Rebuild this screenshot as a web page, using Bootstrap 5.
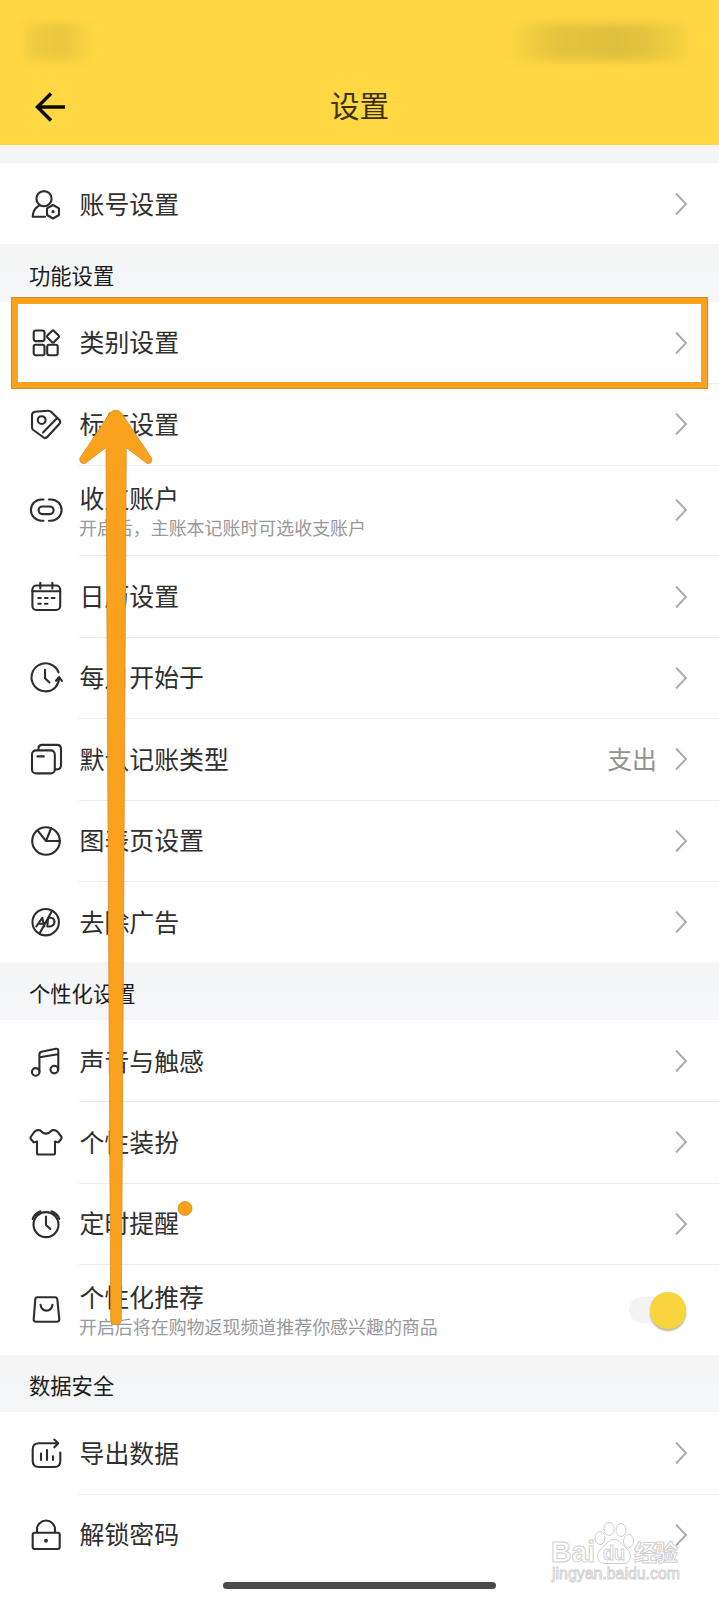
<!DOCTYPE html>
<html lang="zh-CN">
<head>
<meta charset="utf-8">
<meta name="viewport" content="width=device-width, initial-scale=1">
<title>设置</title>
<link href="https://cdn.jsdelivr.net/npm/bootstrap@5.3.0/dist/css/bootstrap.min.css" rel="stylesheet">
<style>
body{font-family:"Noto Sans CJK SC",sans-serif;color:#2f2f2f;background:#fff;height:1600px;overflow:hidden}
.topbar{height:145px;background:#ffd843}
.status{height:72px;padding:23px 29px 0 25px}
.smudge{height:38px;filter:blur(5px)}
.smudge-l{width:80px;background:linear-gradient(90deg,#f2ce41,#e9c640 45%,#ffd843 90%)}
.smudge-r{width:186px;background:linear-gradient(90deg,#ffd843,#e4c33e 28%,#dfbf3e 60%,#e2c23e 75%,#f9d442)}
.titlebar{height:71px}
.titlebar h1{font-size:29.6px;line-height:40px;color:#3b3216;font-weight:400;position:relative;top:-3px}
.back{left:34px;top:19px}
.gap-strip{height:18px;background:#f5f4f6}
.section-title{height:57.3px;padding:4px 0 0 29px;font-size:21.3px;color:#1c1c1c;background:linear-gradient(#f5f5f5,#f4f6f9)}
.setting{height:81.45px;padding-left:30px}
.setting.tall{height:90.7px}
.setting .ico{width:32px;height:32px;fill:none;stroke:#2e2d2b;stroke-width:2.1;stroke-linecap:round;stroke-linejoin:round;flex:none}
.setting .ico .solid{fill:#2e2d2b;stroke:none}
.body-cell{margin-left:17px;padding-right:31px;padding-top:1px;font-size:24.9px;box-shadow:0 1px #ebebeb}
.setting.last .body-cell{box-shadow:none}
.label{line-height:32px;position:relative;top:-1.500px;left:.5px}
.note{font-size:17.95px;line-height:22px;color:#96989b;margin-top:2px;position:relative;top:-.5px}
.tall .label{top:-1.500px}
.value{color:#929292;margin-right:18px;line-height:32px;position:relative;top:-1.500px}
.chev{width:13px;height:24px;fill:none;stroke:#ababab;stroke-width:1.9;flex:none}
.toggle{width:57px;height:38px;right:2px;top:.5px}
.toggle .rail{left:0;top:6px;width:44px;height:26px;border-radius:13px;background:#f3f3f3}
.toggle .knob{right:0;top:1px;width:36.5px;height:36.5px;border-radius:50%;background:#fad43d;box-shadow:0 2px 2px #b9b4a2}
.focus-box{left:11px;top:296.5px;width:697px;height:92.5px;border:7px solid #faa21d;outline:1px solid #d18c2a;outline-offset:-1px}
.overlay{left:0;top:0;pointer-events:none}
.homebar{left:223px;top:1582px;width:273px;height:6.5px;border-radius:4px;background:#4b4b4b}
</style>
</head>
<body class="position-relative">
<header class="topbar">
  <div class="status d-flex justify-content-between"><div class="smudge smudge-l"></div><div class="smudge smudge-r"></div></div>
  <div class="titlebar position-relative d-flex justify-content-center align-items-center">
    <svg class="back position-absolute" width="34" height="32" fill="none" stroke="#0c0a02" stroke-width="3.5"><path d="M31 16H4M17 2.500L3.500 16L17 29.500"/></svg>
    <h1 class="m-0">设置</h1>
  </div>
</header>
<div class="gap-strip"></div>
<main id="list"></main>

<div class="focus-box position-absolute"></div>
<svg class="overlay position-absolute" width="719" height="1600">
  <g fill="#faa21d" stroke="#d58d29" stroke-width=".8">
    <path d="M110 413Q115.700 407 121.500 413L151.500 458Q153 464 147 463.500L126.300 447.500L121.300 1321Q120.500 1325 116 1325Q111.500 1325 110.700 1321L106 447.500L85 463.500Q79 464 80 458Z"/>
    <circle cx="185" cy="1208.500" r="7"/>
  </g>
  <g fill="#fff" stroke="#cfcfcf" stroke-width="1">
    <g font-family="Liberation Sans" font-weight="700">
      <text x="551" y="1562" font-size="29" textLength="44" lengthAdjust="spacingAndGlyphs">Bai</text>
      <text x="634" y="1561" font-family="Noto Sans CJK SC" font-size="23" textLength="44">经验</text>
      <text x="552" y="1579" font-size="16" font-weight="400" textLength="128" lengthAdjust="spacingAndGlyphs" stroke-width=".9">jingyan.baidu.com</text>
    </g>
    <ellipse cx="600" cy="1538" rx="5" ry="6.500"/><ellipse cx="609" cy="1529" rx="5" ry="6.500"/><ellipse cx="621" cy="1530" rx="5" ry="6.500"/><ellipse cx="628.500" cy="1541" rx="5" ry="6.500"/>
    <path d="M614 1539.500C620 1539.500 622 1545 627 1549C632 1553 632 1563 624 1563.500H604C596 1563 596 1553 601 1549C606 1545 608 1539.500 614 1539.500Z"/>
    <text x="603" y="1560" font-family="Liberation Sans" font-size="20" font-weight="700" textLength="22" lengthAdjust="spacingAndGlyphs">du</text>
  </g>
</svg>
<div class="homebar position-absolute"></div>

<script>
const icons = {
  user:'<circle cx="14" cy="10.700" r="7.600"/><path d="M15 28.800H2.700Q3 21 9.200 17.300M23 17L29 20.300V27L23 30.500L17 27V20.300Z"/><circle class="solid" cx="23" cy="23.700" r="1.600"/>',
  grid:'<rect x="3.700" y="4.500" width="10.800" height="10.600" rx="2"/><rect x="3.700" y="18.700" width="10.800" height="10.500" rx="2"/><rect x="17.200" y="18.700" width="10.500" height="10.500" rx="2"/><path d="M22 4.900Q23 4 24 4.900L28.600 9.500Q29.500 10.500 28.600 11.500L24 16.100Q23 17 22 16.100L17.400 11.500Q16.500 10.500 17.400 9.500Z"/>',
  tag:'<path d="M5 3.800L18 2.700Q20 2.600 21.300 4L29.500 12Q31 14 29.500 15.700L17.500 28.800Q15.300 31 13 29L3.300 22Q2 21 2 19.500V7Q2.200 4.200 5 3.800ZM26.500 10.800L13 24.500"/><circle cx="11.700" cy="12.100" r="3.900"/>',
  link:'<path d="M13.500 5.500H11.500A10.600 10.600 0 0 0 11.500 26.700H13.500M19 5.500H21A10.600 10.600 0 0 1 21 26.700H19"/><rect x="8.600" y="12.500" width="15" height="7.600" rx="3.800"/>',
  cal:'<rect x="2.400" y="5.500" width="27.800" height="24.500" rx="4"/><path d="M2.400 11.300H30.200M10.300 2.800V8.500M22.400 2.800V8.500M8.300 18H10.800M15 18H17.500M21.700 18H24.500M8.300 23.700H10.800M15 23.700H17.500"/>',
  clock:'<path d="M28.600 11.300A14 14 0 1 0 25.500 26.200Q29 22 29.200 16.500M26 19.800L29.200 16L32 20M15 8.700V17.300L19.500 21.500"/>',
  copy:'<rect x="2" y="7.400" width="22.800" height="23" rx="4"/><path d="M8.500 7V5.500Q8.500 1.900 12 1.900H27Q31 1.900 31 6V22Q31 26.400 27 26.400H25M7.500 13.400H13.800"/>',
  pie:'<circle cx="16" cy="17" r="13.800"/><path d="M7.500 6.400L16 17L21 4.500M16 17H29.800"/>',
  ad:'<circle cx="15.700" cy="16.200" r="13.200"/><path d="M22 5L9.500 27.500M6.300 20.500L12.300 11.800L14.300 20.500M8.500 17.700H13.500M18 12.500L17.300 20.500H20Q24.300 20 24.500 15.800Q24.300 12 20.500 11.800H18.500"/>',
  music:'<circle cx="5.700" cy="26.900" r="3.800"/><circle cx="24.300" cy="24.600" r="3.800"/><path d="M9.400 26.500V9.500Q9.400 7.300 11.500 6.700L26 3.700Q28.300 3.500 28.300 5.500V24.500M9.600 12.300L28 9.200"/>',
  shirt:'<path d="M10 4.300Q16 11 22 4.300Q25.500 3.500 27.500 5.700L31.500 11Q32 12.200 31 13.300L28.600 16Q27.500 16.500 25 15.500V27Q25 28.500 23.500 28.500H8.500Q7 28.500 7 27V15.500Q4.500 16.500 3.400 16L1 13.300Q0 12.200 .7 11L4.500 5.700Q6.500 3.500 10 4.300Z"/>',
  alarm:'<circle cx="16" cy="17.600" r="12.500"/><path d="M16 9.600V18L20.300 22M2.700 12Q4.500 6.500 10.500 4.300M21.500 4.300Q27.500 6.500 29.300 12M5 8.500L8.500 5.500M27 8.500L23.500 5.500"/>',
  bag:'<path d="M7.500 3.500H25Q27 3.500 27.300 5.500L29.300 25.500Q29.400 28 27 28H6Q3.600 28 3.700 25.500L5.300 5.500Q5.500 3.500 7.500 3.500ZM10.500 11Q11.500 16.700 16.500 16.900Q21.500 16.700 22.500 11" transform="translate(0 .7)"/>',
  export:'<path d="M27.500 6.300H9Q2.700 6.300 2.700 12.500V24Q2.700 30 9 30H24.500Q30.300 30 30.300 24V15.500M24.300 2.500L28.300 6.300L24.300 10.300M11 16.500V23M17 13V23M23 19.300V23"/>',
  lock:'<rect x="2.700" y="14.700" width="27" height="16.300" rx="2"/><path d="M7 14.500V11.500A9 9 0 0 1 25 11.500V14.500M16 22V23.500"/><circle class="solid" cx="16" cy="22.700" r="1.900"/>'
};
const groups = [
  {rows:[['user','账号设置']]},
  {title:'功能设置',rows:[['grid','类别设置'],['tag','标签设置'],['link','收支账户','开启后，主账本记账时可选收支账户'],['cal','日历设置'],['clock','每月开始于'],['copy','默认记账类型',null,'支出'],['pie','图表页设置'],['ad','去除广告']]},
  {title:'个性化设置',rows:[['music','声音与触感'],['shirt','个性装扮'],['alarm','定时提醒'],['bag','个性化推荐','开启后将在购物返现频道推荐你感兴趣的商品','toggle']]},
  {title:'数据安全',rows:[['export','导出数据'],['lock','解锁密码']]}
];
const chevron = '<svg class="chev"><path d="M1 1.500L11 12L1 22.500"/></svg>';
const toggle = '<div class="toggle position-relative"><div class="rail position-absolute"></div><div class="knob position-absolute"></div></div>';
document.getElementById('list').innerHTML = groups.map(g =>
  (g.title ? `<div class="section-title d-flex align-items-center">${g.title}</div>` : '') +
  g.rows.map(([icon,label,note,extra],i) => `
    <div class="setting d-flex align-items-center ${note?'tall':''} ${i===g.rows.length-1?'last':''}">
      <svg class="ico" viewBox="0 0 32 32" overflow="visible">${icons[icon]}</svg>
      <div class="body-cell flex-grow-1 h-100 d-flex align-items-center">
        <div class="flex-grow-1"><div class="label">${label}</div>${note?`<div class="note">${note}</div>`:''}</div>
        ${extra==='toggle' ? toggle : (extra?`<span class="value">${extra}</span>`:'')+chevron}
      </div>
    </div>`).join('')).join('');
</script>
<script src="https://cdn.jsdelivr.net/npm/bootstrap@5.3.0/dist/js/bootstrap.bundle.min.js"></script>
</body>
</html>
